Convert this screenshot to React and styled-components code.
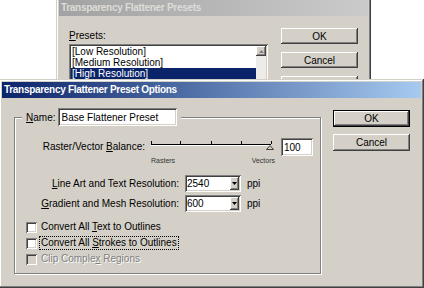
import React from "react";
import styled, { createGlobalStyle } from "styled-components";

const GlobalStyle = createGlobalStyle`
  html, body {
    margin: 0;
    padding: 0;
    background: #fff;
  }
  body {
    font-family: "Liberation Sans", Arial, sans-serif;
    font-size: 10px;
    color: #000;
  }
`;

const Desktop = styled.div`
  position: relative;
  width: 424px;
  height: 288px;
  overflow: hidden;
  background: #fff;
`;

const raised = `
  box-shadow: inset -1px -1px #404040, inset 1px 1px #fff,
    inset -2px -2px #808080, inset 2px 2px #d4d0c8;
`;

const sunken = `
  box-shadow: inset 1px 1px #808080, inset -1px -1px #fff,
    inset 2px 2px #404040, inset -2px -2px #d4d0c8;
`;

const Window = styled.div`
  position: absolute;
  left: ${(p) => p.$left}px;
  top: ${(p) => p.$top}px;
  width: ${(p) => p.$width}px;
  height: ${(p) => p.$height}px;
  box-sizing: border-box;
  padding: 3px;
  background: #d4d0c8;
  box-shadow: inset -1px -1px #404040, inset 1px 1px #d4d0c8,
    inset -2px -2px #808080, inset 2px 2px #fff;
  display: flex;
  flex-direction: column;
`;

const TitleBar = styled.div`
  flex-shrink: 0;
  height: 16px;
  line-height: 16px;
  padding-left: 2px;
  font-weight: bold;
  letter-spacing: -0.3px;
  white-space: nowrap;
  color: ${(p) => (p.$active ? "#fff" : "#dedcd8")};
  background: ${(p) =>
    p.$active
      ? "linear-gradient(to right, #0a246a, #a6caf0)"
      : "linear-gradient(to right, #a2a2a2, #cbcbcb)"};
`;

/* ---------- back dialog ---------- */

const BackBody = styled.div`
  display: flex;
  align-items: flex-start;
  padding: 12px 0 0 10px;
  gap: 13px;
`;

const ListColumn = styled.div`
  width: 199px;
  display: flex;
  flex-direction: column;
`;

const SmallLabel = styled.div`
  line-height: 12px;
  margin: 2px 0;
`;

const ListBox = styled.div`
  height: 70px;
  box-sizing: border-box;
  padding: 2px;
  background: #fff;
  display: flex;
  ${sunken}
`;

const ListItems = styled.div`
  flex: 1;
`;

const ListItem = styled.div`
  line-height: 11px;
  padding-left: 1px;
  white-space: nowrap;
  background: ${(p) => (p.$selected ? "#0a246a" : "transparent")};
  color: ${(p) => (p.$selected ? "#fff" : "#000")};
`;

const ScrollTrack = styled.div`
  width: 10px;
  background: #eeece8;
`;

const ScrollButton = styled.div`
  width: 10px;
  height: 10px;
  box-sizing: border-box;
  background: #d4d0c8;
  display: flex;
  align-items: center;
  justify-content: center;
  ${raised}
`;

const ButtonColumn = styled.div`
  display: flex;
  flex-direction: column;
  gap: ${(p) => p.$gap}px;
  margin-top: ${(p) => p.$top || 0}px;
`;

const Button = styled.div`
  width: 77px;
  height: ${(p) => p.$height}px;
  box-sizing: border-box;
  background: #d4d0c8;
  display: flex;
  align-items: center;
  justify-content: center;
  ${(p) =>
    p.$default
      ? `box-shadow: inset 1px 1px #000, inset -1px -1px #000,
          inset -2px -2px #404040, inset 2px 2px #fff,
          inset -3px -3px #808080;`
      : raised}
`;

/* ---------- front dialog ---------- */

const FrontBody = styled.div`
  display: flex;
  align-items: flex-start;
  padding: 10px 0 0 12px;
  gap: 12px;
`;

const Group = styled.fieldset`
  margin: 0;
  padding: 12px 0 6px 0;
  width: 307px;
  min-inline-size: 0;
  box-sizing: border-box;
  border: 1px solid #808080;
  box-shadow: inset 1px 1px #fff, 1px 1px #fff;
`;

const Legend = styled.legend`
  display: flex;
  align-items: center;
  gap: 3px;
  margin-left: 7px;
  padding: 0 4px;
  height: 18px;
  background: #d4d0c8;
`;

const TextBox = styled.div`
  width: ${(p) => p.$width}px;
  height: ${(p) => p.$height || 18}px;
  box-sizing: border-box;
  padding: 0 2px 0 3px;
  background: #fff;
  display: flex;
  align-items: center;
  white-space: nowrap;
  ${sunken}
`;

const SliderRow = styled.div`
  display: flex;
  align-items: flex-start;
  gap: 6px;
`;

const RowLabel = styled.div`
  width: 130px;
  text-align: right;
  line-height: 18px;
  white-space: nowrap;
`;

const SliderBox = styled.div`
  width: 124px;
  display: flex;
  flex-direction: column;
`;

const SliderEnds = styled.div`
  display: flex;
  justify-content: space-between;
  font-size: 7px;
  line-height: 9px;
  color: #333;
`;

const ResGrid = styled.div`
  display: grid;
  grid-template-columns: 164px 56px auto;
  column-gap: 6px;
  row-gap: 3px;
  margin-top: 10px;
  align-items: center;
`;

const ResLabel = styled.div`
  text-align: right;
  white-space: nowrap;
`;

const Combo = styled.div`
  height: 17px;
  box-sizing: border-box;
  padding: 2px 2px 2px 2px;
  background: #fff;
  display: flex;
  align-items: stretch;
  ${sunken}
`;

const ComboText = styled.div`
  flex: 1;
  display: flex;
  align-items: center;
`;

const DropButton = styled.div`
  width: 9px;
  box-sizing: border-box;
  background: #d4d0c8;
  display: flex;
  align-items: center;
  justify-content: center;
  ${raised}
`;

const Checks = styled.div`
  margin-top: 7px;
  padding-left: 11px;
  display: flex;
  flex-direction: column;
`;

const CheckRow = styled.div`
  display: flex;
  align-items: center;
  height: 16px;
`;

const CheckBox = styled.div`
  width: 11px;
  height: 11px;
  box-sizing: border-box;
  margin-right: 2px;
  background: ${(p) => (p.$disabled ? "#d4d0c8" : "#fff")};
  ${sunken}
`;

const CheckLabel = styled.span`
  padding: 0 1px;
  line-height: 12px;
  white-space: nowrap;
  border: 1px dotted ${(p) => (p.$focused ? "#000" : "transparent")};
  color: ${(p) => (p.$disabled ? "#808080" : "#000")};
  text-shadow: ${(p) => (p.$disabled ? "1px 1px #fff" : "none")};
`;

function Slider() {
  const ticks = [0, 29, 60, 90, 120];
  return (
    <svg width="124" height="18" viewBox="0 0 124 18">
      <line x1="0" y1="6.5" x2="120" y2="6.5" stroke="#000" />
      <line x1="0" y1="7.5" x2="120" y2="7.5" stroke="#fff" />
      {ticks.map((t) => (
        <line key={t} x1={t + 0.5} y1="3" x2={t + 0.5} y2="6" stroke="#000" />
      ))}
      <polygon points="115.5,11.5 122.5,11.5 119,7.5" fill="#d4d0c8" stroke="#404040" />
    </svg>
  );
}

function Arrow({ up }) {
  return (
    <svg width="5" height="3" viewBox="0 0 5 3">
      <polygon points={up ? "0,3 5,3 2.5,0" : "0,0 5,0 2.5,3"} fill={up ? "#808080" : "#000"} />
    </svg>
  );
}

function ResolutionCombo({ value }) {
  return (
    <Combo>
      <ComboText>{value}</ComboText>
      <DropButton>
        <Arrow />
      </DropButton>
    </Combo>
  );
}

export default function App() {
  return (
    <Desktop>
      <GlobalStyle />
      <Window $left={56} $top={-3} $width={315} $height={130}>
        <TitleBar>Transparency Flattener Presets</TitleBar>
        <BackBody>
          <ListColumn>
            <SmallLabel>
              <u>P</u>resets:
            </SmallLabel>
            <ListBox>
              <ListItems>
                <ListItem>[Low Resolution]</ListItem>
                <ListItem>[Medium Resolution]</ListItem>
                <ListItem $selected>[High Resolution]</ListItem>
              </ListItems>
              <ScrollTrack>
                <ScrollButton>
                  <Arrow up />
                </ScrollButton>
              </ScrollTrack>
            </ListBox>
          </ListColumn>
          <ButtonColumn $gap={8}>
            <Button $height={16}>OK</Button>
            <Button $height={16}>Cancel</Button>
            <Button $height={16}>New...</Button>
          </ButtonColumn>
        </BackBody>
      </Window>

      <Window $left={-1} $top={79} $width={425} $height={209}>
        <TitleBar $active>Transparency Flattener Preset Options</TitleBar>
        <FrontBody>
          <Group>
            <Legend>
              <span>
                <u>N</u>ame:
              </span>
              <TextBox $width={119}>Base Flattener Preset</TextBox>
            </Legend>

            <SliderRow>
              <RowLabel>
                Raster/Vector <u>B</u>alance:
              </RowLabel>
              <SliderBox>
                <Slider />
                <SliderEnds>
                  <span>Rasters</span>
                  <span>Vectors</span>
                </SliderEnds>
              </SliderBox>
              <TextBox $width={32}>100</TextBox>
            </SliderRow>

            <ResGrid>
              <ResLabel>
                <u>L</u>ine Art and Text Resolution:
              </ResLabel>
              <ResolutionCombo value="2540" />
              <span>ppi</span>
              <ResLabel>
                <u>G</u>radient and Mesh Resolution:
              </ResLabel>
              <ResolutionCombo value="600" />
              <span>ppi</span>
            </ResGrid>

            <Checks>
              <CheckRow>
                <CheckBox />
                <CheckLabel>
                  Convert All <u>T</u>ext to Outlines
                </CheckLabel>
              </CheckRow>
              <CheckRow>
                <CheckBox />
                <CheckLabel $focused>
                  Convert All <u>S</u>trokes to Outlines
                </CheckLabel>
              </CheckRow>
              <CheckRow>
                <CheckBox $disabled />
                <CheckLabel $disabled>
                  Clip Comple<u>x</u> Regions
                </CheckLabel>
              </CheckRow>
            </Checks>
          </Group>

          <ButtonColumn $gap={7} $top={2}>
            <Button $height={17} $default>
              OK
            </Button>
            <Button $height={17}>Cancel</Button>
          </ButtonColumn>
        </FrontBody>
      </Window>
    </Desktop>
  );
}
